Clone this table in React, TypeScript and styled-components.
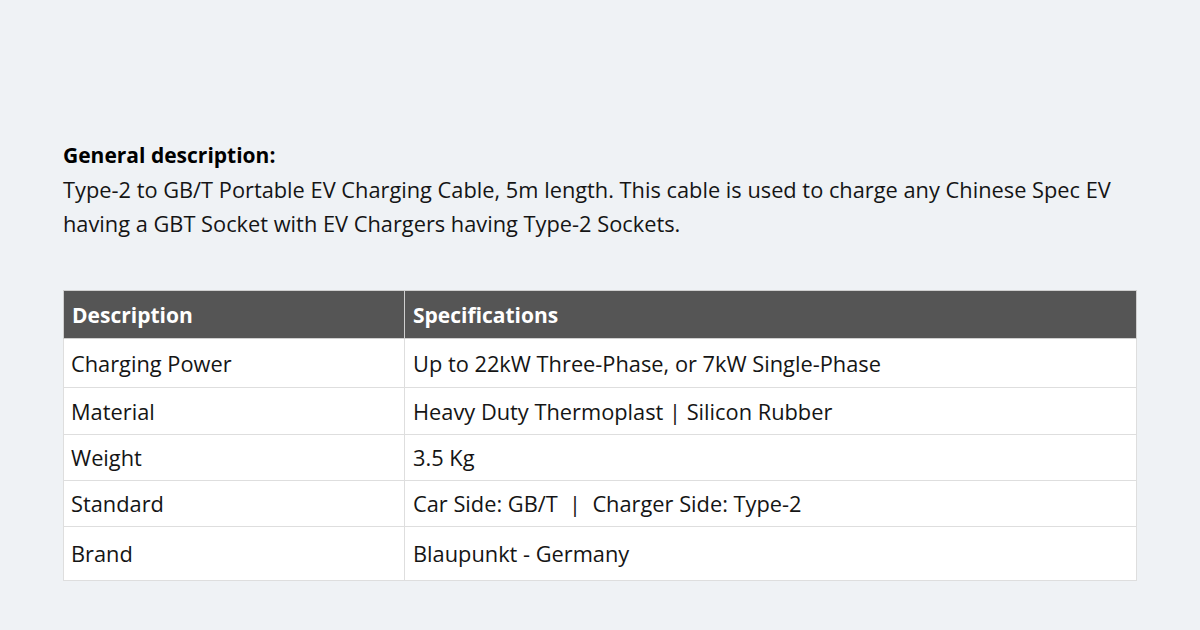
import React from "react";
import styled, { createGlobalStyle } from "styled-components";

const Global = createGlobalStyle`
  html, body { margin: 0; padding: 0; background: #eff2f5; }
  body { font-family: "Open Sans", "Noto Sans", sans-serif; color: #111; }
`;

const Page = styled.div`
  width: 1200px;
  height: 630px;
  box-sizing: border-box;
  padding: 140px 63px 0 63px;
  background: #eff2f5;
`;

const Heading = styled.div`
  font-weight: 700;
  font-size: 21px;
  line-height: 30px;
  color: #000;
`;

const Paragraph = styled.p`
  margin: 3px 0 0 0;
  font-size: 21.8px;
  line-height: 34px;
  color: #151515;
`;

const Table = styled.table`
  margin-top: 49px;
  width: 1074px;
  border-collapse: collapse;
  background: #fff;
`;

const HeadCell = styled.th`
  background: #555555;
  color: #fff;
  text-align: left;
  font-weight: 700;
  font-size: 21px;
  height: 48px;
  padding: 0 8px;
  border: 1px solid #cfcfcf;
  box-sizing: border-box;
`;

const Cell = styled.td<{ $h: number }>`
  font-size: 21.8px;
  color: #151515;
  height: ${(p) => p.$h}px;
  padding: 0 8px;
  border: 1px solid #dedede;
  box-sizing: border-box;
  vertical-align: middle;
  &:first-child {
    padding-left: 7px;
  }
`;

const rows: [string, string, number][] = [
  ["Charging Power", "Up to 22kW Three-Phase, or 7kW Single-Phase", 49],
  ["Material", "Heavy Duty Thermoplast | Silicon Rubber", 47],
  ["Weight", "3.5 Kg", 46],
  ["Standard", "Car Side: GB/T\u00a0 |\u00a0 Charger Side: Type-2", 46],
  ["Brand", "Blaupunkt - Germany", 54],
];

export default function App() {
  return (
    <>
      <Global />
      <Page>
        <Heading>General description:</Heading>
        <Paragraph>
          Type-2 to GB/T Portable EV Charging Cable, 5m length. This cable is used to charge any Chinese Spec EV
          having a GBT Socket with EV Chargers having Type-2 Sockets.
        </Paragraph>
        <Table>
          <colgroup>
            <col style={{ width: 341 }} />
            <col />
          </colgroup>
          <thead>
            <tr>
              <HeadCell>Description</HeadCell>
              <HeadCell>Specifications</HeadCell>
            </tr>
          </thead>
          <tbody>
            {rows.map(([a, b, h]) => (
              <tr key={a}>
                <Cell $h={h}>{a}</Cell>
                <Cell $h={h}>{b}</Cell>
              </tr>
            ))}
          </tbody>
        </Table>
      </Page>
    </>
  );
}
